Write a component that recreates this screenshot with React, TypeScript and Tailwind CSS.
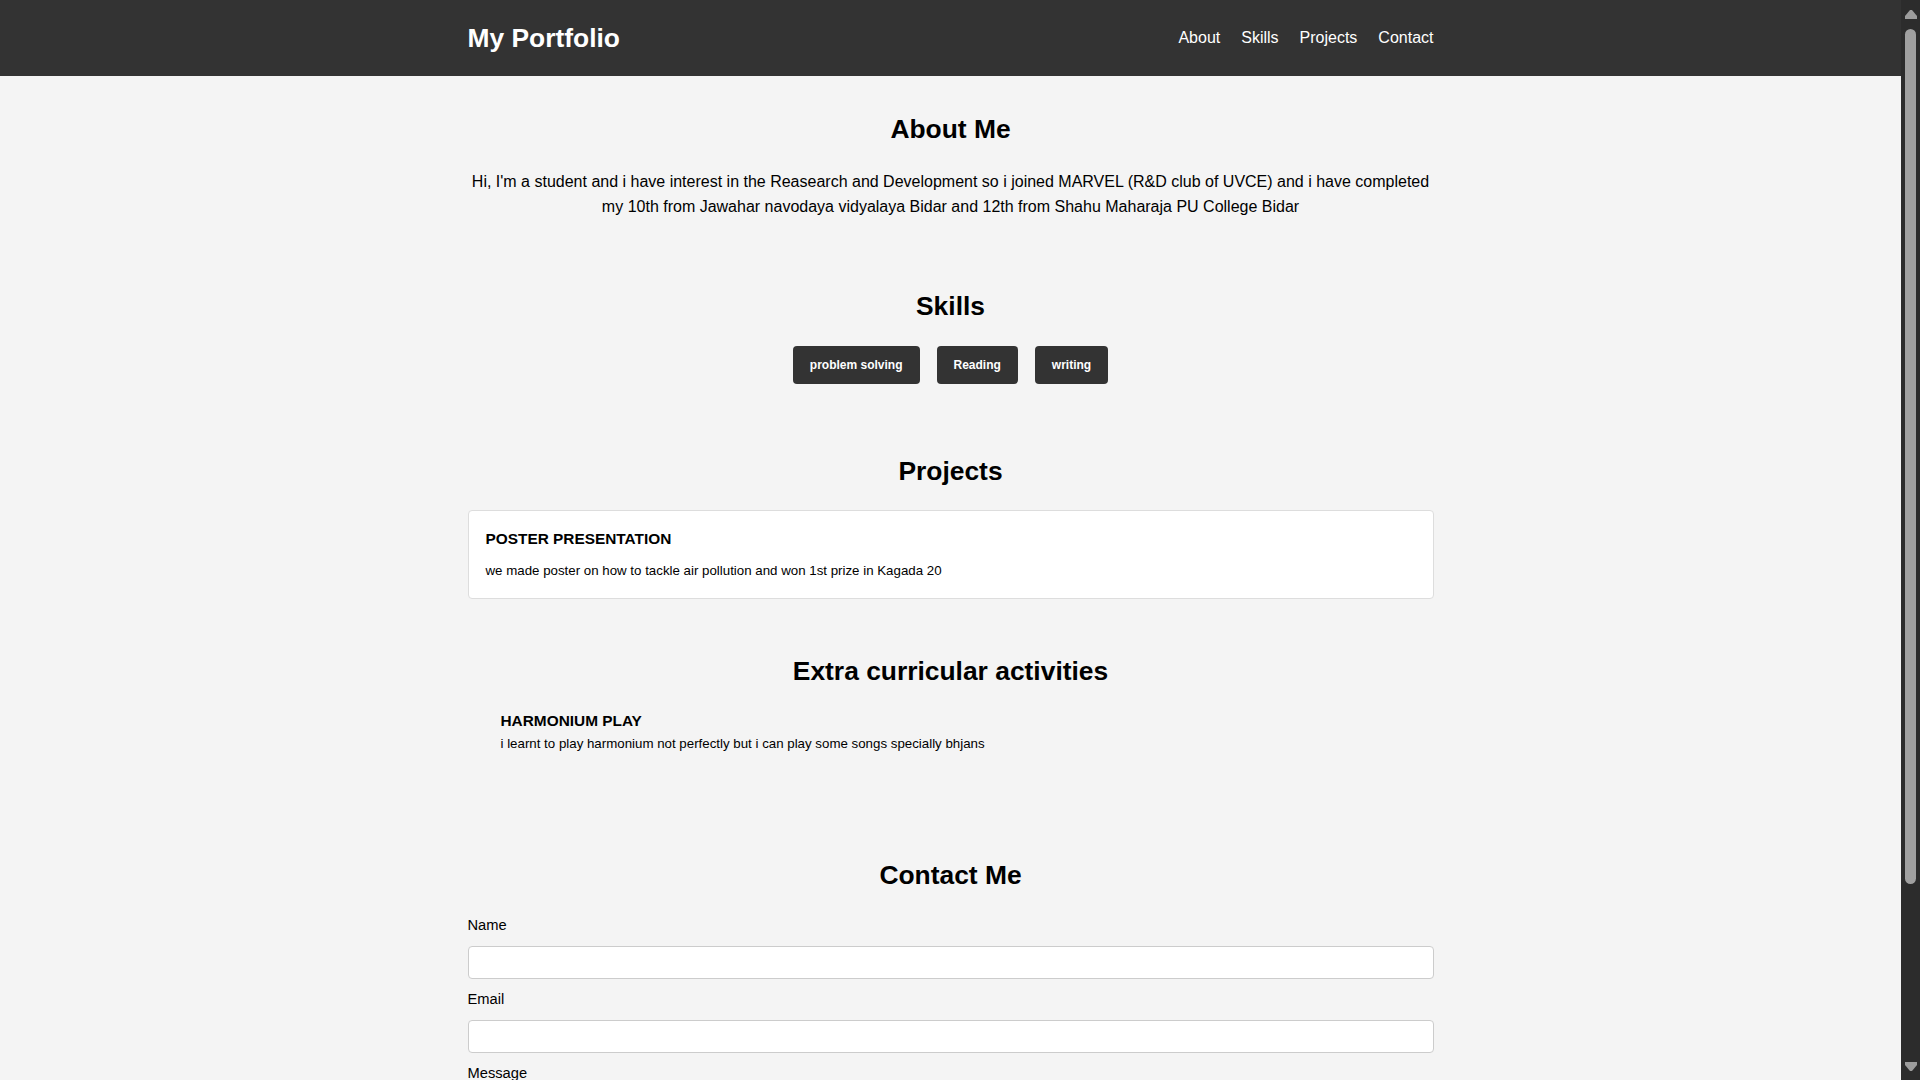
import React from "react";

function ScrollStrip() {
  return (
    <div className="flex h-screen w-[19px] shrink-0 flex-col items-center bg-[#2c2c2c]">
      <svg width="12" height="9" viewBox="0 0 12 9" className="mt-[10px]">
        <polygon points="5,0 7,0 12,6 12,9 0,9 0,6" fill="#9c9c9c" />
      </svg>
      <div className="mt-[10px] h-[855px] w-[11px] rounded-full bg-[#a0a0a0]" />
      <div className="flex-1" />
      <svg width="12" height="9" viewBox="0 0 12 9" className="mb-[9px]">
        <polygon points="0,0 12,0 12,3 7,9 5,9 0,3" fill="#9c9c9c" />
      </svg>
    </div>
  );
}

export default function App() {
  return (
    <div className="flex h-screen bg-[#f4f4f4] font-['Liberation_Sans',Arial,sans-serif] text-black">
      <div className="min-w-0 flex-1 overflow-y-auto">
        <header className="bg-[#333333] text-white">
          <div className="mx-auto flex h-[76px] w-[966px] items-center justify-between">
            <h1 className="text-[26.4px] font-bold leading-[30px]">My Portfolio</h1>
            <nav className="flex gap-[21px] text-[16px] leading-[20px]">
              <a href="#about">About</a>
              <a href="#skills">Skills</a>
              <a href="#projects">Projects</a>
              <a href="#contact">Contact</a>
            </nav>
          </div>
        </header>

        <main className="mx-auto w-[966px] pb-[60px]">
          <section id="about" className="pt-[38px] text-center">
            <h2 className="mb-[25px] text-[26.4px] font-bold leading-[30px]">About Me</h2>
            <p className="text-[16px] leading-[25px]">
              Hi, I'm a student and i have interest in the Reasearch and Development so i joined MARVEL (R&amp;D club of UVCE) and i have completed my 10th from Jawahar navodaya vidyalaya Bidar and 12th from Shahu Maharaja PU College Bidar
            </p>
          </section>

          <section id="skills" className="mt-[72px] text-center">
            <h2 className="mb-[25px] text-[26.4px] font-bold leading-[30px]">Skills</h2>
            <div className="flex justify-center gap-[17px]">
              <span className="flex h-[38px] items-center rounded-[4px] bg-[#333333] px-[17px] text-[12px] font-bold text-white">problem solving</span>
              <span className="flex h-[38px] items-center rounded-[4px] bg-[#333333] px-[17px] text-[12px] font-bold text-white">Reading</span>
              <span className="flex h-[38px] items-center rounded-[4px] bg-[#333333] px-[17px] text-[12px] font-bold text-white">writing</span>
            </div>
          </section>

          <section id="projects" className="mt-[72px]">
            <h2 className="mb-[24px] text-center text-[26.4px] font-bold leading-[30px]">Projects</h2>
            <div className="rounded-[4px] border border-[#dddddd] bg-white px-[17px] pb-[19px] pt-[19px]">
              <h3 className="mb-[15px] text-[15.4px] font-bold leading-[18px]">POSTER PRESENTATION</h3>
              <p className="text-[13.3px] leading-[16px]">we made poster on how to tackle air pollution and won 1st prize in Kagada 20</p>
            </div>
          </section>

          <section className="mt-[57px]">
            <h2 className="mb-[26px] text-center text-[26.4px] font-bold leading-[30px]">Extra curricular activities</h2>
            <div className="pl-[33px]">
              <h3 className="text-[15.4px] font-bold leading-[18px]">HARMONIUM PLAY</h3>
              <p className="mt-[6px] text-[13.3px] leading-[16px]">i learnt to play harmonium not perfectly but i can play some songs specially bhjans</p>
            </div>
          </section>

          <section id="contact" className="mt-[108px]">
            <h2 className="mb-[27px] text-center text-[26.4px] font-bold leading-[30px]">Contact Me</h2>
            <form className="flex flex-col">
              <label className="mb-[12px] text-[14.7px] leading-[17px]">Name</label>
              <input type="text" className="mb-[12px] h-[33px] rounded-[4px] border border-[#cccccc] bg-white px-[8px]" />
              <label className="mb-[12px] text-[14.7px] leading-[17px]">Email</label>
              <input type="email" className="mb-[12px] h-[33px] rounded-[4px] border border-[#cccccc] bg-white px-[8px]" />
              <label className="mb-[12px] text-[14.7px] leading-[17px]">Message</label>
              <textarea className="mb-[12px] h-[100px] rounded-[4px] border border-[#cccccc] bg-white px-[8px]" />
              <button type="button" className="h-[38px] w-[80px] rounded-[4px] bg-[#333333] text-[13px] font-bold text-white">Send</button>
            </form>
          </section>
        </main>
      </div>
      <ScrollStrip />
    </div>
  );
}
